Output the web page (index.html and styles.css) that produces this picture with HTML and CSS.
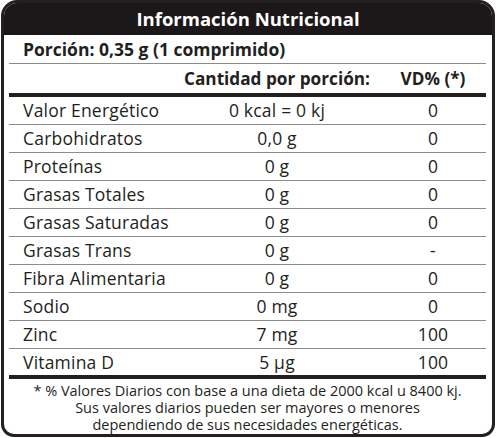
FILE: index.html
```html
<!DOCTYPE html>
<html lang="es">
<head>
    <meta charset="UTF-8">
    <meta name="viewport" content="width=device-width, initial-scale=1.0">
    <title>Información Nutricional</title>
    <link rel="stylesheet" href="styles.css">
</head>
<body>

    <div class="label">
        <div class="label-title">Información Nutricional</div>

        <div class="label-body">
            <div class="portion">Porción: 0,35 g (1 comprimido)</div>

            <div class="row row-head">
                <span></span>
                <span class="col-mid">Cantidad por porción:</span>
                <span class="col-vd">VD% (*)</span>
            </div>

            <div class="rows">
                <div class="row"><span>Valor Energético</span><span class="col-mid">0 kcal = 0 kj</span><span class="col-vd">0</span></div>
                <div class="row"><span>Carbohidratos</span><span class="col-mid">0,0 g</span><span class="col-vd">0</span></div>
                <div class="row"><span>Proteínas</span><span class="col-mid">0 g</span><span class="col-vd">0</span></div>
                <div class="row"><span>Grasas Totales</span><span class="col-mid">0 g</span><span class="col-vd">0</span></div>
                <div class="row"><span>Grasas Saturadas</span><span class="col-mid">0 g</span><span class="col-vd">0</span></div>
                <div class="row"><span>Grasas Trans</span><span class="col-mid">0 g</span><span class="col-vd">-</span></div>
                <div class="row"><span>Fibra Alimentaria</span><span class="col-mid">0 g</span><span class="col-vd">0</span></div>
                <div class="row"><span>Sodio</span><span class="col-mid">0 mg</span><span class="col-vd">0</span></div>
                <div class="row"><span>Zinc</span><span class="col-mid">7 mg</span><span class="col-vd">100</span></div>
                <div class="row"><span>Vitamina D</span><span class="col-mid">5 µg</span><span class="col-vd">100</span></div>
            </div>

            <div class="footnote">
                * % Valores Diarios con base a una dieta de 2000 kcal u 8400 kj.<br>
                Sus valores diarios pueden ser mayores o menores<br>
                dependiendo de sus necesidades energéticas.
            </div>
        </div>
    </div>

</body>
</html>
```

FILE: styles.css
```css
body {
    margin: 0;
    background: #ffffff;
    font-family: "Open Sans", Lato, sans-serif;
    color: #231f20;
}

.label {
    width: 488px;
    height: 431px;
    margin-left: 1px;
    border: 3px solid #231f20;
    border-radius: 16px 16px 13px 13px;
    overflow: hidden;
    display: flex;
    flex-direction: column;
}

.label-title {
    height: 32px;
    background: #1c1819;
    color: #ffffff;
    font-weight: bold;
    font-size: 18.5px;
    line-height: 31px;
    text-align: center;
}

.label-body {
    padding: 0 6px 0 5px;
}

.portion {
    height: 28px;
    line-height: 28px;
    padding-left: 14px;
    font-size: 17.5px;
    font-weight: bold;
    border-bottom: 1px solid #8c8c8c;
}

.row {
    display: grid;
    grid-template-columns: 168px 200px 109px;
    height: 27px;
    line-height: 27px;
    font-size: 17.5px;
    letter-spacing: 0.2px;
    white-space: nowrap;
    border-bottom: 1px solid #8c8c8c;
}

.row span:first-child {
    padding-left: 14px;
}

.row-head {
    height: 29px;
    line-height: 29px;
    font-weight: bold;
    font-size: 17.2px;
    letter-spacing: 0;
    border-bottom: 4px solid #231f20;
}

.rows .row:last-child {
    border-bottom: 4px solid #231f20;
    height: 26px;
}

.col-mid {
    text-align: center;
}

.col-vd {
    text-align: center;
    padding-left: 3px;
}

.footnote {
    padding-top: 3px;
    font-size: 14.5px;
    line-height: 17px;
    text-align: center;
}
```
